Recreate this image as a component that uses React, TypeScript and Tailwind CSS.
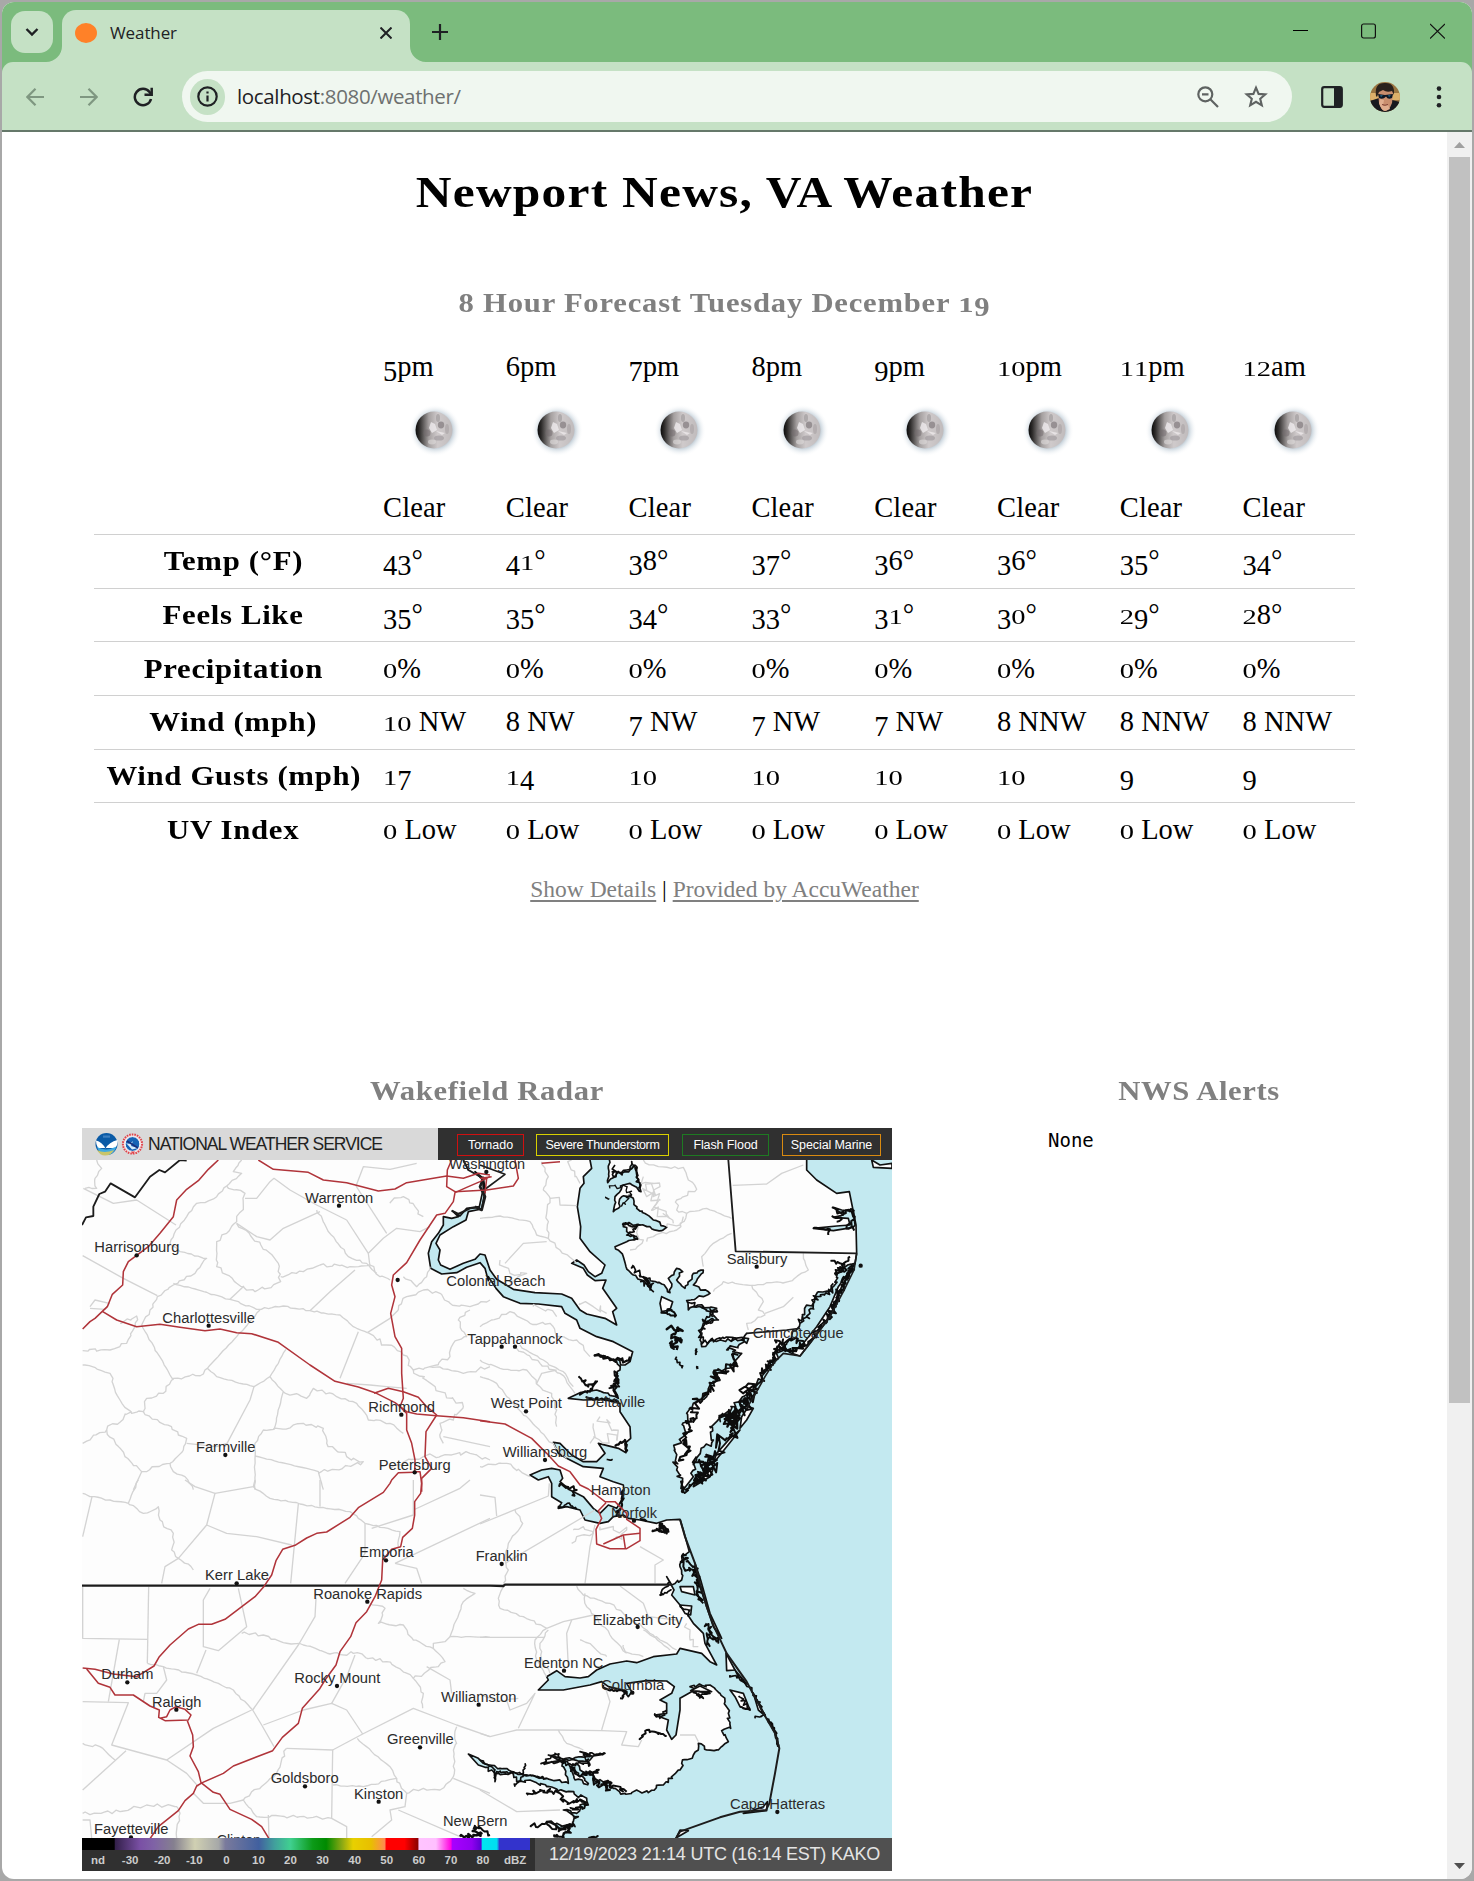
import React from 'react';

/* ---------- text with old-style figures ---------- */

const SHORT = '012';
const LOW = '34579';

function Figures({ children }: { children: string }) {
  return (
    <>
      {children.split('').map((c, i) => {
        if (SHORT.includes(c))
          return (
            <span key={i} className="inline-block origin-[0_84%] scale-y-[.74] leading-none">
              {c}
            </span>
          );
        if (LOW.includes(c))
          return (
            <span key={i} className="inline-block translate-y-[.16em] leading-none">
              {c}
            </span>
          );
        return <React.Fragment key={i}>{c}</React.Fragment>;
      })}
    </>
  );
}

/* ---------- forecast data ---------- */

const hours = ['5pm', '6pm', '7pm', '8pm', '9pm', '10pm', '11pm', '12am'];

const rows: { label: string; values: string[] }[] = [
  { label: 'Temp (°F)', values: ['43°', '41°', '38°', '37°', '36°', '36°', '35°', '34°'] },
  { label: 'Feels Like', values: ['35°', '35°', '34°', '33°', '31°', '30°', '29°', '28°'] },
  { label: 'Precipitation', values: ['0%', '0%', '0%', '0%', '0%', '0%', '0%', '0%'] },
  { label: 'Wind (mph)', values: ['10 NW', '8 NW', '7 NW', '7 NW', '7 NW', '8 NNW', '8 NNW', '8 NNW'] },
  { label: 'Wind Gusts (mph)', values: ['17', '14', '10', '10', '10', '10', '9', '9'] },
  { label: 'UV Index', values: ['0 Low', '0 Low', '0 Low', '0 Low', '0 Low', '0 Low', '0 Low', '0 Low'] },
];

function Moon() {
  return (
    <svg width="60" height="60" viewBox="0 0 60 60">
      <defs>
        <radialGradient id="halo">
          <stop offset=".6" stopColor="#9fb0bd" stopOpacity=".9" />
          <stop offset=".78" stopColor="#c3d0da" stopOpacity=".45" />
          <stop offset="1" stopColor="#fff" stopOpacity="0" />
        </radialGradient>
        <linearGradient id="shade">
          <stop offset="0" stopColor="#0b0b0b" />
          <stop offset=".1" stopColor="#2c2a29" />
          <stop offset=".36" stopColor="#a5a0a0" />
          <stop offset=".6" stopColor="#cfcacb" />
          <stop offset="1" stopColor="#c0bbbc" />
        </linearGradient>
        <clipPath id="disc">
          <circle cx="30" cy="30" r="18.5" />
        </clipPath>
        <filter id="soft">
          <feGaussianBlur stdDeviation=".7" />
        </filter>
      </defs>
      <circle cx="31" cy="30.5" r="26" fill="url(#halo)" />
      <circle cx="30" cy="30" r="18.5" fill="url(#shade)" />
      <g clipPath="url(#disc)" filter="url(#soft)">
        <ellipse cx="37" cy="25" rx="3.2" ry="3.4" fill="#857f81" opacity=".75" />
        <ellipse cx="34" cy="18" rx="2" ry="4" fill="#9a9496" opacity=".6" />
        <ellipse cx="23" cy="33" rx="3.5" ry="3.5" fill="#6f6a6b" opacity=".5" />
        <ellipse cx="35" cy="38" rx="5" ry="2.6" fill="#a39d9f" opacity=".7" />
        <ellipse cx="43" cy="29" rx="2" ry="5" fill="#a29c9e" opacity=".5" />
        <path d="M27 22L31 24L33 30L28 33L25 28Z" fill="#efeced" opacity=".8" />
        <path d="M32 31L41 33L38 35Z" fill="#eeeaeb" opacity=".8" />
        <ellipse cx="28" cy="42" rx="4" ry="2.4" fill="#dedadb" opacity=".6" />
      </g>
    </svg>
  );
}

/* ---------- radar map ---------- */

type Pt = [number, number];

/** Parses "x,y x,y" and moves the points by (dx, dy). */
function at(dx: number, dy: number, s: string): Pt[] {
  return s
    .trim()
    .split(/\s+/)
    .map((p) => {
      const [x, y] = p.split(',').map(Number);
      return [x + dx, y + dy] as Pt;
    });
}
const NW = (s: string) => at(0, 0, s);
const NE = (s: string) => at(1230, 0, s);
const SW = (s: string) => at(0, 1110, s);
const SE = (s: string) => at(1230, 1110, s);
const line = (p: Pt[]) => 'M' + p.map((q) => q.join(' ')).join('L');

/** Deterministic small kinks along a line, for marshy shores and river-like borders. */
function rough(pts: Pt[], amp: number, step = 9, seed = 7): Pt[] {
  let s = seed;
  const rnd = () => {
    s = (s * 16807) % 2147483647;
    return s / 2147483647 - 0.5;
  };
  const out: Pt[] = [pts[0]];
  for (let i = 1; i < pts.length; i++) {
    const [x0, y0] = pts[i - 1];
    const [x1, y1] = pts[i];
    const n = Math.max(1, Math.round(Math.hypot(x1 - x0, y1 - y0) / step));
    for (let k = 1; k < n; k++) {
      out.push([
        Math.round((x0 + ((x1 - x0) * k) / n + rnd() * amp) * 10) / 10,
        Math.round((y0 + ((y1 - y0) * k) / n + rnd() * amp) * 10) / 10,
      ]);
    }
    out.push([x1, y1]);
  }
  return out;
}

const sea: Pt[] = [
  ...NE('330,100 330,150 335,175 310,200 312,220 300,235 292,290 302,350 300,385 330,425 375,465 365,490 345,500 325,485 312,465 290,450 275,460 310,475 322,495 345,512 378,510 368,535 410,595 398,605 410,645 375,625 320,612 300,600 275,565 245,552 165,548 100,538 50,508 30,480 15,435 0,432'),
  ...NW('1215,448 1180,460 1140,478 1112,465 1105,450 1110,420 1098,400 1110,375 1150,350 1188,330 1195,305 1235,297 1246,240 1240,205 1215,185 1238,210 1240,235 1228,290 1190,295 1170,318 1147,303 1165,320 1145,325 1120,320 1120,345 1105,370 1085,395 1075,430 1082,475 1115,492 1160,488 1190,472 1230,458 1245,475 1255,512'),
  ...NE('25,500 48,535 70,560 120,580 175,582 245,590 255,610 290,630 300,655 350,680 400,695 458,725 450,755 435,765'),
  ...rough(NE('435,765 415,750 345,735 380,742 410,755 420,780 408,800 418,830 392,828 415,865 350,840'), 12),
  ...NE('300,848 265,865 310,870 370,868 420,880 420,905 450,950 452,985 435,1000 438,1028 415,1015 355,1000 375,1030 350,1055 310,1055 275,1035 240,1000 220,997 235,1030 260,1045 310,1070 370,1075 360,1100 400,1115 430,1125'),
  ...SE('432,30 425,60 410,85 385,75 360,100 340,85 310,50 270,30 240,5 248,-5 240,-30 215,-35 185,-30 150,-15 175,0 205,-10 215,10 215,50 245,68 235,85 260,80 300,90 315,120 360,130 385,125 400,110 430,105 445,115 480,120 530,130 560,120 600,118 610,150 628,215'),
  ...rough(SE('628,215 605,230 600,260 605,300 575,315'), 14),
  ...SE('560,290 582,330 575,345 600,375 620,400 640,430 670,460 675,490 710,555 690,545 665,520 600,505 590,522 520,530 470,548 440,543 390,552 350,570 325,590 300,594 255,590 230,572 200,590 205,600 175,630 250,630 330,615 365,605 385,620 430,630 445,650 455,635 440,610 500,602 560,603 583,620 575,640 540,660 560,670 560,700 525,705 565,720 560,750 575,778 588,765 600,690 600,655 640,632 690,640'),
  ...rough(SE('690,640 630,620 690,615 720,640 735,665 745,700 752,745 725,752 745,785 715,810 680,810 655,790 655,810 640,825 605,850 600,870 565,895 550,915 505,938 470,930 435,940 400,925 390,905 350,905 340,885 300,870 290,850 270,860 325,910 285,900 262,845 190,850'), 13),
  ...rough(SE('260,838 325,845 340,828 375,820 340,828 300,815 330,830 250,837 205,825 248,845'), 6),
  ...rough(SE('248,845 265,910 200,895 130,885 60,865 10,850'), 9),
  ...SW('1225,835 1195,822 1225,855 1245,862'),
  ...rough(SE('25,862 45,880 100,882 110,905 150,900 200,920 240,930 320,955 325,975 300,975 290,1000 250,990 295,1010 280,1025 285,1040 230,1030 200,1025 235,1045 270,1045 250,1070 260,1090'), 14),
  ...SE('270,1150 1320,1150 1320,-1200'),
];

const delmarva: Pt[] = [
  ...rough(NE('392,130 385,175 383,218 410,190 450,180 455,155 470,185 483,245 450,220 430,225 405,260 400,305 415,295 425,260 460,265 470,295 520,330 560,352 545,362 510,350 480,345 430,340 440,365 475,385 440,395'), 9),
  ...rough(NE('405,410 430,440 438,470 460,495 500,520 520,545 490,500 545,522 570,548 575,530 565,505 590,475 608,485 590,510 615,535 640,490 670,480 640,525 690,550 670,560 620,572 625,600 640,590 710,595 690,610 715,630 670,640 660,690 665,710 700,690 790,690 800,670'), 9, 9, 11),
  ...rough(NE('800,670 800,700 740,720 785,730 770,760 740,775 700,785 720,810 690,825 680,860 640,880 620,910 610,980 585,1020 590,1080 608,1130'), 20, 9, 5),
  ...NE('605,1145 640,1100'),
  ...rough(NE('640,1100 650,1050 700,990 690,950 730,915 790,860 830,820 880,750 920,700 960,640 1005,560 1060,530 1080,470 1125,460'), 18, 9, 3),
  ...NE('1130,430 1128,345 1108,245 1070,250 1010,210 980,180 980,120'),
];

const lagoons: Pt[][] = [
  NE('1125,345 1120,305 1085,300 1060,292 1090,315 1060,322 1105,325 1110,345 1070,348 1000,355 1060,362 1120,352'),
];

const outerIslands: Pt[][] = [
  NE('1125,460 1100,505 1085,530 1050,620 990,700 960,738 935,730 970,700 1010,650 1050,590 1075,530'),
  NE('820,895 800,930 780,955 785,920 805,890'),
  NE('780,960 740,1010 700,1060 710,1030 750,985'),
  NE('700,1075 690,1100 640,1130 650,1100'),
  NE('1175,150 1180,172 1236,175 1236,160 1200,165'),
  NE('545,560 578,575 570,600 545,605 540,580'),
  SE('645,250 662,300 690,400 725,475 700,440 680,380 660,320'),
  SE('738,520 740,572 765,570'),
  SE('765,570 800,612 780,600'),
  SE('750,630 790,640 810,690 780,680 765,650'),
  SE('820,640 856,708 835,690'),
  SE('600,320 640,320 645,345 605,335'),
  SE('600,375 635,378 632,405 615,400'),
  SE('632,632 660,618 695,635 660,634'),
  SE('862,965 860,992 790,1000 850,980'),
  SE('600,1050 625,1052 588,1074'),
];

const scribbles: { p: Pt[]; amp: number; w: number }[] = [
  { p: NE('1118,465 1105,500 1080,540 1060,600 1020,650 985,695 950,720 900,712 870,755 850,790 820,840 790,880'), amp: 22, w: 6 },
  { p: NE('1110,480 1085,540 1065,585 1040,620'), amp: 14, w: 6 },
  { p: NE('960,640 990,610 1010,560 1055,545 1060,520'), amp: 18, w: 5 },
  { p: NE('1000,355 1050,358 1045,375'), amp: 5, w: 6 },
  { p: NE('1060,292 1080,308 1118,300 1122,330 1100,350 1122,356'), amp: 12, w: 6 },
  { p: NE('1055,318 1085,325 1070,335'), amp: 8, w: 6 },
  { p: NE('1055,450 1080,460 1100,480 1065,490 1110,440'), amp: 12, w: 6 },
  { p: NE('795,830 825,850 780,880 800,900 740,920 770,950 720,1000 690,1040 700,1070 660,1090 640,1120'), amp: 42, w: 6 },
  { p: NE('730,910 750,930 780,925 760,950 740,930 785,900 800,880'), amp: 30, w: 7 },
  { p: NE('650,1040 670,1080 690,1050 655,1110 700,1075'), amp: 28, w: 6 },
  { p: NE('890,700 950,690 975,705 930,725 900,700 875,755 860,780'), amp: 20, w: 6 },
  { p: NE('775,735 760,770 715,780 700,820 680,850 645,880 640,900'), amp: 30, w: 6 },
  { p: NE('640,905 650,925 620,940 630,960 610,990 625,1020 600,1050'), amp: 20, w: 6 },
  { p: NE('625,575 680,600 710,600 670,635 700,630 660,660 665,700 720,685 795,690'), amp: 14, w: 5 },
  { p: NE('565,655 605,660 575,675 605,690 570,700 590,720'), amp: 20, w: 7 },
  { p: NE('590,740 605,775'), amp: 12, w: 5 },
  { p: NE('545,605 575,600 585,620 560,612'), amp: 12, w: 6 },
  { p: NE('650,715 648,735'), amp: 5, w: 6 },
  { p: NE('652,768 653,777'), amp: 3, w: 7 },
  { p: NE('300,800 325,830 350,815 330,845 300,850'), amp: 12, w: 6 },
  { p: NE('320,862 370,868 415,872'), amp: 12, w: 6 },
  { p: NE('345,735 400,748 440,752 450,740'), amp: 12, w: 7 },
  { p: NE('390,835 415,820 405,785 410,860'), amp: 12, w: 6 },
  { p: NE('460,465 480,500 520,520 510,540 480,515'), amp: 16, w: 5 },
  { p: NE('405,165 400,200 440,180 470,170 475,235'), amp: 14, w: 5 },
  { p: NE('390,235 430,225 455,255 425,290'), amp: 14, w: 4 },
  { p: NE('375,262 388,268'), amp: 6, w: 5 },
  { p: NE('430,345 480,345 440,375 475,388'), amp: 14, w: 5 },
  { p: NE('408,1010 435,990 438,1025'), amp: 10, w: 7 },
  { p: NE('380,1048 398,1048'), amp: 5, w: 5 },
  { p: SE('520,150 565,155 540,130 560,160 535,145'), amp: 14, w: 7 },
  { p: SE('430,30 425,70 410,105 425,110'), amp: 10, w: 7 },
  { p: SE('240,10 290,30 275,45'), amp: 14, w: 6 },
  { p: SE('235,85 262,70 290,88'), amp: 8, w: 5 },
  { p: SE('480,118 500,124'), amp: 8, w: 7 },
  { p: SE('620,225 610,260 640,270 650,300 655,350 670,370'), amp: 24, w: 6 },
  { p: SE('625,240 650,280 660,320 655,350'), amp: 16, w: 6 },
  { p: SE('570,305 540,345 575,330'), amp: 8, w: 5 },
  { p: SE('680,430 700,470 715,485 680,460 690,500'), amp: 16, w: 6 },
  { p: SE('750,585 790,600 820,640 855,705 825,715'), amp: 10, w: 5 },
  { p: SE('865,715 885,755 895,800'), amp: 6, w: 8 },
  { p: SE('780,650 810,690 780,680'), amp: 12, w: 5 },
  { p: SE('600,380 630,390 625,410'), amp: 10, w: 5 },
  { p: SE('640,635 670,655 650,645 690,635'), amp: 10, w: 5 },
  { p: SE('525,700 540,715 560,690'), amp: 10, w: 5 },
  { p: SE('480,780 500,750 560,768'), amp: 8, w: 6 },
  { p: SE('185,850 225,820 250,850 330,855 310,825 375,820'), amp: 12, w: 5 },
  { p: SE('280,860 300,890 350,870 345,910 390,930 375,905 440,935'), amp: 20, w: 6 },
  { p: SE('105,920 130,885 200,895'), amp: 10, w: 5 },
  { p: SE('0,840 45,870 45,905 50,875 130,880 135,850'), amp: 6, w: 5 },
  { p: SE('145,945 180,930 240,940 250,965 300,960 320,975 270,985'), amp: 18, w: 6 },
  { p: SE('155,1040 200,1030 240,1050 280,1035 250,1070 220,1065'), amp: 16, w: 6 },
  { p: SE('-20,1050 5,1060 -20,1065 -60,1070'), amp: 14, w: 7 },
  { p: SE('-15,1035 30,1065'), amp: 10, w: 6 },
  { p: SE('325,1072 355,1070'), amp: 6, w: 6 },
  { p: SE('370,615 385,630 440,635 420,655'), amp: 8, w: 6 },
  { p: SE('610,5 610,35 640,10 670,0'), amp: 14, w: 6 },
];

const counties: { p: Pt[]; amp?: number }[] = [
  { p: NW('80,150 95,175 75,205 80,235 45,235'), amp: 6 },
  { p: NW('40,235 130,280 200,270 318,345') },
  { p: NW('515,150 490,185 515,190 470,228 440,260 405,278 380,280 350,320 318,360 300,400'), amp: 4 },
  { p: NW('470,228 525,250 520,290 500,335 470,370 440,395 440,470 500,520 555,545 632,515 625,460 610,440 500,340'), amp: 8 },
  { p: NW('525,265 560,265 600,215 612,205 660,240 740,285 830,330') },
  { p: NW('500,340 560,380 600,390 640,355 750,305') },
  { p: NW('740,300 770,355 835,440 890,460 920,490'), amp: 6 },
  { p: NW('38,437 160,505 262,557') },
  { p: NW('300,400 330,425 410,445 375,490 310,525 262,560 240,600 215,645'), amp: 6 },
  { p: NW('310,520 480,568 560,598 640,588 720,602 810,615 850,650 892,668'), amp: 4 },
  { p: NW('480,568 522,528') },
  { p: NW('632,500 700,485 750,465 840,470 900,465 930,500 960,510'), amp: 8 },
  { p: NW('720,602 780,545 855,480') },
  { p: NW('830,330 895,430 940,385 980,355 1050,365 1080,350') },
  { p: NW('895,430 900,470') },
  { p: NW('858,228 880,170 960,178 1040,160') },
  { p: NW('858,228 950,370') },
  { p: NW('960,280 1000,260 1035,290 1060,320'), amp: 14 },
  { p: NW('60,590 75,570 118,580 105,598 60,595') },
  { p: NW('150,640 200,618 195,650 170,700 120,720 38,722'), amp: 8 },
  { p: NW('215,645 300,795 310,810'), amp: 4 },
  { p: NW('38,765 120,790 150,870 185,910 220,905 230,865 280,850 310,805 400,792 412,775'), amp: 8 },
  { p: NW('570,600 500,680 412,775 440,800 552,830 600,800 648,718'), amp: 2 },
  { p: NW('552,830 540,870 466,1010') },
  { p: NW('600,800 640,845 612,958 580,960 555,1000 555,1139'), amp: 3 },
  { p: NW('640,845 710,865 730,835 800,860 860,880 895,930 960,940 1000,970'), amp: 8 },
  { p: NW('865,665 810,805') },
  { p: NW('892,668 960,625 985,600') },
  { p: NW('892,668 950,705 1000,735 1030,780 1080,770 1180,790 1260,770'), amp: 10 },
  { p: NW('985,600 1010,560 1060,540 1110,550 1140,580 1200,590 1260,570'), amp: 8 },
  { p: NW('1000,500 1040,530 1070,500 1080,470'), amp: 6 },
  { p: NW('1200,600 1165,630 1190,680 1150,700 1140,740 1080,770'), amp: 8 },
  { p: NW('185,905 110,960 38,1000'), amp: 12 },
  { p: NW('220,905 350,985 340,1020 300,1060 215,1085 165,1040 110,960'), amp: 8 },
  { p: NW('215,1085 190,1139') },
  { p: NW('350,1000 440,1010 470,1000') },
  { p: NW('300,1060 310,1085 345,1100 370,1139'), amp: 5 },
  { p: NW('555,1038 745,1085 760,1139'), amp: 2 },
  { p: NW('610,958 700,940 760,955 770,1000 830,1040 880,1055 745,1090'), amp: 10 },
  { p: NW('830,820 900,825 950,830 1010,835') },
  { p: NW('1030,780 1110,845 1180,890 1150,930 1110,940 1120,1000'), amp: 12 },
  { p: NW('1120,980 1260,1010') },
  { p: NW('960,1070 1060,1040 1200,1030 1260,1050'), amp: 10 },
  { p: SW('38,40 60,50 120,60 175,70 205,0'), amp: 4 },
  { p: SW('66,50 38,170') },
  { p: SW('175,70 220,100 265,80 270,120 310,160 305,210 325,235 370,270'), amp: 8 },
  { p: SW('325,235 410,135 435,40 550,20 555,0') },
  { p: SW('435,40 375,20 345,0') },
  { p: SW('550,20 600,55 690,72 840,95 885,130 990,155 985,200'), amp: 4 },
  { p: SW('410,135 470,160 560,170 665,195') },
  { p: SW('685,72 662,310') },
  { p: SW('750,0 750,80') },
  { p: SW('885,130 885,220 825,310') },
  { p: SW('1030,0 1030,105 905,145') },
  { p: SW('1030,90 1170,25 1200,0') },
  { p: SW('975,250 1260,115') },
  { p: SW('975,250 1040,265 1055,310') },
  { p: SW('325,235 285,260 275,310') },
  { p: SW('38,320 38,475 232,478') },
  { p: SW('236,320 232,550') },
  { p: SW('148,478 115,665') },
  { p: SW('420,325 400,360 400,500 445,512 530,440 505,325') },
  { p: SW('408,510 380,580') },
  { p: SW('232,550 280,560 380,585 490,630 548,690'), amp: 4 },
  { p: SW('280,560 290,600 260,640 225,640 220,665') },
  { p: SW('38,665 175,668 125,795 290,840') },
  { p: SW('515,460 580,465 640,488 700,495 780,522 850,520 950,545 1030,595'), amp: 8 },
  { p: SW('738,355 735,410 685,495 548,690 575,735 612,800') },
  { p: SW('855,525 830,590 785,670') },
  { p: SW('580,735 700,690 785,670 830,690 878,762') },
  { p: SW('545,690 430,745 290,840 350,880 385,920') },
  { p: SW('38,790 90,800 135,840'), amp: 8 },
  { p: SW('168,812 38,930') },
  { p: SW('788,810 878,762 1030,685 1160,735 1260,770') },
  { p: SW('650,805 788,810 785,1015 830,1040 830,1075') },
  { p: SW('650,805 612,890 520,960 560,1010 690,1010 785,1015'), amp: 6 },
  { p: SW('370,940 400,970 480,970 520,960') },
  { p: SW('862,775 905,815 960,860 980,895 880,920 788,915'), amp: 4 },
  { p: SW('980,895 1010,940 1060,925 1110,930 1150,890 1160,740'), amp: 8 },
  { p: SW('1010,940 1005,980 960,990 965,1020 905,1070') },
  { p: SW('985,990 1170,1070') },
  { p: SW('1150,895 1260,940') },
  { p: SW('38,1000 150,995 230,975 320,980 330,1000 320,1075'), amp: 8 },
  { p: SW('38,1020 60,1020 65,1075') },
  { p: SW('595,1005 597,1075') },
  { p: SW('900,370 945,385 925,430 1000,435 1030,480 1090,505 1125,545 1030,595 1060,640 1058,685'), amp: 8 },
  { p: SW('1180,325 1215,340 1180,365 1140,470 1260,472'), amp: 3 },
  { p: SW('1140,470 1125,485 1090,490 1090,508') },
  { p: SW('1070,560 1140,600 1145,640') },
  { p: NE('185,155 205,200 190,240 210,265 200,310 205,385 240,420 290,460'), amp: 8 },
  { p: NE('275,150 285,200 300,220'), amp: 22 },
  { p: NE('210,265 238,262 240,285 290,287') },
  { p: NE('0,325 60,318 150,335 170,375 205,385'), amp: 3 },
  { p: NE('75,460 130,400 200,395') },
  { p: NE('60,450 90,490 140,490 90,520'), amp: 14 },
  { p: NE('490,150 535,170 610,172 625,210 650,238 590,270 590,300 620,310'), amp: 8 },
  { p: NE('620,310 680,295 755,325'), amp: 4 },
  { p: NE('758,226 860,222 905,190 970,165') },
  { p: NE('500,395 520,380 590,360 620,310'), amp: 12 },
  { p: NE('755,370 700,400 665,440 670,470'), amp: 4 },
  { p: NE('700,545 730,515 800,525 925,515 985,480 970,430'), amp: 6 },
  { p: NE('815,525 850,575 835,600 855,615 800,640 805,660'), amp: 6 },
  { p: NE('855,610 910,590 940,562') },
  { p: NE('490,200 520,220 500,260 540,270 520,300 560,320'), amp: 26 },
  { p: NE('500,240 540,230 530,280 580,340'), amp: 26 },
  { p: NE('560,350 600,345 610,320'), amp: 18 },
  { p: NE('445,350 475,350 490,390 450,420'), amp: 16 },
  { p: NE('0,650 90,605 150,640 210,640 230,680 290,690 330,740'), amp: 6 },
  { p: NE('0,750 60,775 140,780 180,830 215,850 230,900 230,950'), amp: 8 },
  { p: NE('110,715 180,760 240,790 270,830 285,850'), amp: 6 },
  { p: NE('120,705 190,750 250,785 280,830'), amp: 6 },
  { p: NE('170,820 185,790 230,780') },
  { p: NE('160,590 200,600 230,620'), amp: 20 },
  { p: NE('0,800 50,820 80,860 150,930 200,985 260,1045'), amp: 6 },
  { p: NE('340,940 345,980 330,1000'), amp: 4 },
  { p: NE('300,580 340,590 380,610'), amp: 24 },
  { p: NE('360,920 400,960 410,990 340,980'), amp: 26 },
  { p: NE('0,1070 80,1060 150,1100'), amp: 8 },
  { p: SE('0,45 45,52 50,108') },
  { p: SE('0,132 205,48 208,10') },
  { p: SE('105,90 128,130 85,190 75,240 85,270 70,310'), amp: 5 },
  { p: SE('75,250 345,90') },
  { p: SE('345,135 330,200 315,310') },
  { p: SE('280,150 310,140 340,160 290,170 275,190'), amp: 12 },
  { p: SE('360,140 400,150 440,150 400,180'), amp: 22 },
  { p: SE('480,200 550,240 525,255 525,310') },
  { p: SE('70,320 55,355 60,385 130,410 200,445'), amp: 4 },
  { p: SE('200,445 165,480 170,540 200,590'), amp: 4 },
  { p: SE('205,450 180,490 185,540 210,580'), amp: 4 },
  { p: SE('200,445 250,425 340,405') },
  { p: SE('275,420 260,460 265,560') },
  { p: SE('290,318 310,345 390,370 440,410 500,450 570,510'), amp: 4 },
  { p: SE('315,340 320,380 390,465 440,520'), amp: 6 },
  { p: SE('420,318 490,370 505,410 590,420') },
  { p: SE('490,450 540,480 590,510'), amp: 6 },
  { p: SE('300,480 340,500 380,530'), amp: 12 },
  { p: SE('430,495 450,520 490,530'), amp: 12 },
  { p: SE('620,430 630,480 655,500'), amp: 14 },
  { p: SE('0,472 195,472') },
  { p: SE('80,660 90,690 140,670 165,640 115,745') },
  { p: SE('0,760 30,770 110,750 230,750 365,752 440,755 425,795 475,800 485,780') },
  { p: SE('375,620 390,665 365,750') },
  { p: SE('235,750 260,790 310,810'), amp: 4 },
  { p: SE('600,765 645,765 655,785') },
  { p: SE('0,930 110,995 240,990') },
  { p: SE('0,640 50,665 115,655'), amp: 4 },
];

const roads: Pt[][] = [
  NW('445,150 415,178 385,212 350,238 320,270 310,320 270,370 235,410 175,455 160,485 158,525 127,553 112,590 97,604 75,625 60,635 38,657'),
  NW('97,604 140,630 200,650 270,643 330,652 405,662 450,657 500,668 545,671 625,697 720,765 795,814 865,831 915,848 975,878 1010,905 1040,912 1100,917 1180,923 1260,935'),
  NW('565,150 610,178 715,187 760,210 830,218 925,243 975,237 1010,218 1130,198 1180,205 1225,190 1260,195'),
  NW('1145,150 1132,180 1130,230 1155,245 1250,240 1330,228 1345,205 1335,150'),
  NE('185,160 240,155'),
  NW('1260,200 1230,215 1190,232 1155,248 1150,275 1125,310 1100,315 1050,390 1010,458 970,495 965,525 975,560 962,610 975,680 995,715 995,790 1000,865 990,890 1010,910 1010,960 1025,1000 1035,1050 1034,1087'),
  NW('1245,250 1250,205 1232,205 1265,200'),
  NW('912,850 955,835 1000,845 1045,862 1070,890 1100,915 1068,965 1065,1040 1085,1075 1055,1105 1055,1145'),
  [...NE('0,932 75,942 155,985 200,1030 235,1068 270,1085 300,1125'), ...SE('325,27 375,65 405,65 440,100 440,118 480,145 480,182 440,206 390,206 350,192 348,148 365,115 355,92 378,68')],
  SE('370,192 430,165 480,160'),
  SE('430,165 436,205'),
  [...NW('1034,1087 985,1088 965,1110'), ...SW('960,10 940,37 865,83 840,112 770,156 740,160 710,174 675,196 638,208 618,242 605,285 580,322 555,350 465,418 425,433 385,433 355,447 300,495 268,530 252,558 200,590 130,582 75,568 38,564')],
  [...NW('1030,1085 1050,1085 1055,1120'), ...SW('1052,40 1034,65 1034,105 1027,145 998,172 992,200 965,208 938,240 935,300 915,350 890,395 858,428 842,470 810,515 798,555 765,600 748,628 697,685 685,730 637,772 608,812 490,858 460,880 397,908 380,918 370,940 345,962 325,992 265,1040 240,1076')],
  SW('50,567 85,610 120,622 135,645 190,645 240,678 268,690 266,712 285,722 355,720 363,705 345,688 318,680 300,690 290,710 270,715'),
  SW('352,722 368,765 370,800 360,828 385,875 393,908 430,937 450,943 480,988 545,1018 575,1040 597,1076'),
];

const borders: { d: Pt[]; w: number }[] = [
  { d: NW('36,345 48,322 70,318 70,290 88,252 105,245 122,220 195,262 240,200 268,180 285,187 330,150 350,152'), w: 5.5 },
  { d: [...SW('36,317 1260,317'), ...SE('70,318 75,314 575,314')], w: 7 },
  { d: NE('745,150 767,424 1130,430'), w: 5.5 },
  { d: NE('800,670 920,660 960,655'), w: 5 },
  { d: NE('0,165 75,193 12,240'), w: 5 },
  { d: NW('1180,150 1195,180 1240,205'), w: 6 },
  { d: NE('12,200 0,230 15,260 5,300 -15,290'), w: 8 },
  { d: NW('1145,302 1165,312 1200,295 1230,292'), w: 6 },
  { d: SE('600,118 615,170 645,250 660,310 680,380 702,440 740,520 800,605 855,708 885,760 898,805 885,880 868,970 858,990 780,995 720,1012 600,1055 585,1080'), w: 6 },
  { d: NE('1130,430 1122,480 1090,545 1050,620 990,700 960,738 910,730 880,760 855,800 830,845 800,895'), w: 5 },
];

const cities: [string, number, number, number][] = [
  ['Washington', 1137, 177, 228],
  ['Warrenton', 705, 278, 205],
  ['Harrisonburg', 73, 427, 255],
  ['Charlottesville', 277, 638, 278],
  ['Colonial Beach', 1129, 527, 297],
  ['Tappahannock', 1192, 702, 286],
  ['Richmond', 895, 905, 200],
  ['Farmville', 378, 1027, 178],
  ['Petersburg', 926, 1079, 216],
  ['West Point', 1262, 895, 214],
  ['Deltaville', 1546, 890, 180],
  ['Williamsburg', 1298, 1042, 254],
  ['Salisbury', 1970, 463, 182],
  ['Chincoteague', 2048, 685, 273],
  ['Hampton', 1562, 1156, 180],
  ['Norfolk', 1623, 1223, 138],
  ['Franklin', 1217, 1352, 156],
  ['Emporia', 868, 1342, 163],
  ['Kerr Lake', 405, 1410, 192],
  ['Roanoke Rapids', 730, 1467, 326],
  ['Durham', 94, 1708, 156],
  ['Raleigh', 246, 1791, 148],
  ['Rocky Mount', 673, 1720, 258],
  ['Williamston', 1113, 1776, 226],
  ['Greenville', 951, 1903, 200],
  ['Goldsboro', 602, 2020, 204],
  ['Kinston', 852, 2066, 148],
  ['New Bern', 1119, 2148, 193],
  ['Fayetteville', 72, 2173, 223],
  ['Clinton', 440, 2205, 133],
  ['Elizabeth City', 1568, 1544, 270],
  ['Edenton NC', 1362, 1673, 238],
  ['Columbia', 1593, 1739, 190],
  ['Cape Hatteras', 1980, 2097, 285],
];

const dots = NW(
  '807,287 200,436 416,647 983,510 994,914 466,1035 1034,1087 1249,186 1295,710 1335,710 1368,904 1425,1050 2060,470 2372,467 948,1351 500,1420 892,1475 172,1717 319,1799 801,1728 1226,1784 1050,1912 705,2029 926,2075 1215,2155 183,2182 1295,1362 1703,1551 1482,1682 1687,1748 2122,2106 1692,1232',
);

function RadarMap() {
  return (
    <svg className="block" width="810" height="678" viewBox="36 150 2430 2034" strokeLinejoin="round" fill="none">
      <rect x="0" y="100" width="2500" height="2200" fill="#fdfdfd" />
      <path d={line(sea) + 'Z'} fill="#c3e9f0" stroke="#111" strokeWidth="5" />
      <path d={line(delmarva) + 'Z'} fill="#fdfdfd" stroke="#111" strokeWidth="5" />
      {lagoons.map((p, i) => (
        <path key={i} d={line(p) + 'Z'} fill="#c3e9f0" stroke="#111" strokeWidth="5" />
      ))}
      {outerIslands.map((p, i) => (
        <path key={i} d={line(p) + 'Z'} fill="#fdfdfd" stroke="#111" strokeWidth="5" />
      ))}
      <g stroke="#d3d3d3" strokeWidth="4">
        {counties.map((c, i) => (
          <path key={i} d={line(c.amp ? rough(c.p, c.amp * 1.3, 12, i + 3) : c.p)} />
        ))}
      </g>
      <g stroke="#0c0c0c">
        {scribbles.map((s, i) => (
          <path key={i} d={line(rough(s.p, s.amp, 5, i + 21))} strokeWidth={s.w} />
        ))}
      </g>
      <g stroke="#1c1c1c">
        {borders.map((b, i) => (
          <path key={i} d={line(b.d)} strokeWidth={b.w} />
        ))}
      </g>
      <g stroke="#b0343a" strokeWidth="4.6">
        {roads.map((r, i) => (
          <path key={i} d={line(r)} />
        ))}
      </g>
      <g fill="#111">
        {dots.map(([x, y], i) => (
          <circle key={i} cx={x} cy={y} r="6.5" />
        ))}
      </g>
      <g fill="#2b2b2b" fontSize="44" fontFamily="'Liberation Sans', Arial, sans-serif">
        {cities.map(([name, x, y, w]) => (
          <text key={name} x={x} y={y} textLength={w} lengthAdjust="spacingAndGlyphs">
            {name}
          </text>
        ))}
      </g>
    </svg>
  );
}

const scale = ['nd', '-30', '-20', '-10', '0', '10', '20', '30', '40', '50', '60', '70', '80', 'dBZ'];

function NoaaLogos() {
  return (
    <svg width="50" height="26" viewBox="0 0 50 26">
      <circle cx="11.5" cy="13" r="11" fill="#0a5aa6" />
      <path d="M1 9.500Q7 11 10.500 17.500Q14 11 22.500 9Q23 14 20 17L3 17Q.8 13 1 9.500Z" fill="#fff" />
      <path d="M2 16Q11 21 21.500 15.500Q19 24 11.500 24Q4.500 24 2 16Z" fill="#3fa9e0" />
      <path d="M2 19Q9 23 19 19Q16 24.500 10 24.500Q5 24.500 2 19Z" fill="#c9c56a" />
      <rect x="8" y="4.500" width="7" height="2.200" fill="#3d7fc0" />
      <circle cx="37.500" cy="13" r="9.600" fill="#f4dede" stroke="#e0444b" strokeWidth="2" strokeDasharray="1.600 1" />
      <circle cx="37.500" cy="13" r="7.400" fill="#1763b5" stroke="#fff" strokeWidth="1" />
      <path d="M31 12Q35 14 38 10L36 15L43 17L37 18.500Z" fill="#d8ecfb" />
      <path d="M32 10L43 17" stroke="#1a2f7c" strokeWidth="1.500" />
      <path d="M36 20.500L40 20.500L38 23Z" fill="#e0444b" />
    </svg>
  );
}

function Radar() {
  return (
    <div className="w-[810px] font-['Liberation_Sans',Arial,sans-serif]">
      <div className="flex h-8 bg-[#303030]">
        <div className="flex w-[356px] items-center bg-[#d9d9d9] pl-[13px]">
          <NoaaLogos />
          <span className="ml-[3px] whitespace-nowrap text-[17.500px] tracking-[-1px] text-[#222]">NATIONAL WEATHER SERVICE</span>
        </div>
        <div className="flex flex-1 items-center pt-px pl-[19px] text-[12.500px] text-white">
          <span className="flex h-[22px] w-[67px] items-center justify-center border-[1.500px] border-[#d01010] pt-px">Tornado</span>
          <span className="ml-3 flex h-[22px] w-[133px] items-center justify-center border-[1.500px] border-[#d8d000] pt-px tracking-[-0.35px]">
            Severe Thunderstorm
          </span>
          <span className="ml-[13px] flex h-[22px] w-[87px] items-center justify-center border-[1.500px] border-[#1e7a22] pt-px tracking-[-0.1px]">
            Flash Flood
          </span>
          <span className="ml-[13px] flex h-[22px] w-[99px] items-center justify-center border-[1.500px] border-[#d98a10] pt-px tracking-[-0.1px]">
            Special Marine
          </span>
        </div>
      </div>
      <RadarMap />
      <div className="flex h-[33px] bg-[#505050]">
        <div className="w-[453px] bg-[#303030]">
          <div className="h-3 w-[448px] bg-[linear-gradient(90deg,#000_0_7.2%,#33204a_7.4%,#7a50a5_13%,#7f62a6_16%,#85808f_20.500%,#d0d0b2_25.200%,#a6a8a8_30.500%,#7a7a9c_32%,#41609f_39.500%,#41a09c_43%,#40d090_46.500%,#0c9a18_51.500%,#008a00_54.500%,#8aa814_58%,#e8d000_60.500%,#e8bf00_64.500%,#ff8a50_67.600%,#ff0000_67.900%,#ff0000_72%,#8b0000_75%,#ffc4ff_75.200%,#ffc0ff_79%,#ff00e0_82.400%,#a800ff_82.600%,#9000f0_87%,#5800d0_89.100%,#00e4f0_89.300%,#00e0f0_92.600%,#3333cc_93.200%)]" />
          <div className="flex h-5 w-[449px] text-[11.500px] font-bold text-[#cccccc]">
            {scale.map((s) => (
              <span key={s} className="flex-1 pt-px text-center leading-[19px]">
                {s}
              </span>
            ))}
          </div>
        </div>
        <div className="flex flex-1 items-center pl-[14px] text-[18px] tracking-[-0.22px] whitespace-nowrap text-[#e4e4e4]">
          12/19/2023 21:14 UTC (16:14 EST) KAKO
        </div>
      </div>
    </div>
  );
}

/* ---------- browser chrome ---------- */

function Avatar() {
  return (
    <svg width="30" height="30" viewBox="0 0 30 30">
      <defs>
        <clipPath id="face">
          <circle cx="15" cy="15" r="15" />
        </clipPath>
      </defs>
      <g clipPath="url(#face)">
        <rect width="30" height="30" fill="#9a7440" />
        <rect y="11" width="30" height="7" fill="#dcb06a" />
        <path d="M0 30V19L9 16L22 18L30 20V30Z" fill="#181a1f" />
        <path d="M8 10Q8 5 15 5Q23 5 23 11L22 21Q19 29 15 29Q11 28 9 21Z" fill="#c98e6e" />
        <path d="M14 18L13 24L18 23L20 27L15 29Q11 28 9 21L10 17Z" fill="#e0ad8e" />
        <path d="M6 14Q4 0 16 1Q25 1 24 13L22 9Q17 11 13 8L9 10L7 15Z" fill="#2a211c" />
        <path d="M8 12L15 13L23 12L22 16Q18 18 16 14.500Q13 18 9 16Z" fill="#0c1624" />
        <path d="M10 13L13 13L11 15.500ZM18 13L21 13L19 15.500Z" fill="#1e5675" />
        <path d="M12 22.500Q15 24 18 22.500" stroke="#7d3f34" strokeWidth="1" fill="none" />
      </g>
    </svg>
  );
}

function TabStrip() {
  return (
    <div className="flex h-[60px] bg-[#7bbb7d]">
      <div className="flex w-[60px] items-start pt-[9px] pl-[9px]">
        <div className="flex h-[42px] w-[42px] items-center justify-center rounded-[14px] bg-[#c5e1c5]">
          <svg width="14" height="10" viewBox="0 0 14 10" fill="none" stroke="#1f2124" strokeWidth="2.400">
            <path d="M1.500 2L7 7.500L12.500 2" />
          </svg>
        </div>
      </div>
      <div className="relative mt-2 flex h-[52px] w-[348px] items-center rounded-t-[14px] bg-[#c5e1c5] pb-[7px]">
        <svg className="absolute bottom-0 -left-4" width="16" height="16">
          <path d="M16 0V16H0A16 16 0 0 0 16 0Z" fill="#c5e1c5" />
        </svg>
        <svg className="absolute -right-4 bottom-0" width="16" height="16">
          <path d="M0 0V16H16A16 16 0 0 1 0 0Z" fill="#c5e1c5" />
        </svg>
        <span className="ml-[13px] h-[20px] w-[22px] rounded-[50%] bg-[#ff8128]" />
        <span className="ml-[13px] flex-1 text-[17px] tracking-[-0.1px] text-[#1f2124]">Weather</span>
        <svg className="mr-[18px]" width="12" height="12" viewBox="0 0 12 12" stroke="#1f2124" strokeWidth="2">
          <path d="M.5 .5L11.500 11.500M11.500 .5L.5 11.500" />
        </svg>
      </div>
      <svg className="mt-[22px] ml-[22px]" width="16" height="16" viewBox="0 0 16 16" stroke="#1f2124" strokeWidth="2.200">
        <path d="M8 0V16M0 8H16" />
      </svg>
      <div className="ml-auto flex items-start pt-[21px]">
        <svg className="mr-[53px]" width="15" height="16">
          <path d="M0 7.500H15" stroke="#000" />
        </svg>
        <svg className="mr-[54px]" width="15" height="16" viewBox="0 0 15 16" fill="none" stroke="#111" strokeWidth="1.200">
          <rect x=".6" y="1" width="13.800" height="14" rx="2" />
        </svg>
        <svg className="mr-[27px]" width="15" height="16" viewBox="0 0 15 16" stroke="#111" strokeWidth="1.200">
          <path d="M0 1L15 15.500M15 1L0 15.500" />
        </svg>
      </div>
    </div>
  );
}

function Toolbar() {
  return (
    <div className="bg-[#7bbb7d]">
      <div className="flex h-[70px] items-start rounded-t-[11px] border-b-2 border-[#65786a] bg-[#c5e1c5] pt-[9px]">
        <div className="flex h-[51px] w-[180px] items-center pl-6">
          <svg width="18" height="18" viewBox="0 0 18 18" fill="none" stroke="#7f9781" strokeWidth="2.200">
            <path d="M18 9H2M9.500 .8L1.400 9L9.500 17.200" />
          </svg>
          <svg className="ml-9" width="18" height="18" viewBox="0 0 18 18" fill="none" stroke="#7f9781" strokeWidth="2.200">
            <path d="M0 9H16M8.500 .8L16.600 9L8.500 17.200" />
          </svg>
          <svg className="ml-[35px]" width="20" height="20" viewBox="0 0 20 20" fill="none" stroke="#1f2124" strokeWidth="2.500">
            <path d="M18 12A8.200 8.200 0 1 1 16.500 5L18 7" />
            <path d="M18.700 .8V7.700H11.500" />
          </svg>
        </div>
        <div className="flex h-[51px] w-[1110px] items-center rounded-full bg-[#f0f7f0] pl-2">
          <span className="flex h-9 w-[35px] items-center justify-center rounded-full bg-[#c5e1c5]">
            <svg width="21" height="21" viewBox="0 0 21 21" fill="none" stroke="#1f2124" strokeWidth="2.200">
              <circle cx="10.500" cy="10.500" r="9.200" />
              <path d="M10.500 9.500V15.500" />
              <path d="M10.500 5.500V7.600" />
            </svg>
          </span>
          <span className="ml-[12px] flex-1 text-[20.500px] tracking-[-0.35px] text-[#1f2124]">
            localhost<span className="text-[#6d706f]">:8080/weather/</span>
          </span>
          <svg className="mr-[25px]" width="22" height="22" viewBox="0 0 22 22" fill="none" stroke="#5f6362" strokeWidth="2.200">
            <circle cx="8.300" cy="8.300" r="7" />
            <path d="M13.300 13.300L21 21M5 8.300H11.500" />
          </svg>
          <svg className="mr-6" width="24" height="23" viewBox="0 0 24 23" fill="none" stroke="#5f6362" strokeWidth="2.100">
            <path d="M12 2.700L14.600 8.900L21.300 9.400L16.200 13.800L17.800 20.300L12 16.800L6.200 20.300L7.800 13.800L2.700 9.400L9.400 8.900Z" />
          </svg>
        </div>
        <div className="flex h-[51px] flex-1 items-center">
          <svg className="ml-[29px]" width="22" height="22" viewBox="0 0 22 22">
            <rect x="1.200" y="1.200" width="19.600" height="19.600" rx="2" fill="none" stroke="#1f2124" strokeWidth="2.200" />
            <rect x="13" y="1" width="8" height="20" fill="#1f2124" />
          </svg>
          <span className="ml-[27px]">
            <Avatar />
          </span>
          <svg className="ml-9" width="6" height="22" viewBox="0 0 6 22" fill="#1f2124">
            <circle cx="3" cy="2.600" r="2.300" />
            <circle cx="3" cy="11" r="2.300" />
            <circle cx="3" cy="19.300" r="2.300" />
          </svg>
        </div>
      </div>
    </div>
  );
}

function Scrollbar() {
  return (
    <div className="flex w-[25px] flex-col items-center bg-[#f0f0f0]">
      <svg className="mt-[10px] mb-[9px]" width="11" height="6">
        <path d="M0 6L5.500 0L11 6Z" fill="#a0a0a0" />
      </svg>
      <div className="h-[1246px] w-[21px] bg-[#c1c1c1]" />
      <svg className="mt-auto mb-[10px]" width="11" height="6">
        <path d="M0 0L5.500 6L11 0Z" fill="#505050" />
      </svg>
    </div>
  );
}

/* ---------- page ---------- */

function Forecast() {
  return (
    <div className="mx-auto mt-[26px] w-[1261px] text-[28.500px]">
      <div className="grid grid-cols-[289px_repeat(8,122.800px)] pb-2">
        <div />
        {hours.map((h) => (
          <div key={h} className="leading-9">
            <Figures>{h}</Figures>
            <div className="flex h-[94px] w-[101px] items-center justify-center pb-1">
              <Moon />
            </div>
            <div className="mt-[11px] tracking-[0.15px]">Clear</div>
          </div>
        ))}
      </div>
      {rows.map((r) => (
        <div
          key={r.label}
          className="grid h-[53.700px] grid-cols-[279px_repeat(8,122.800px)] items-center border-t border-[#d0d0d0] leading-9 whitespace-nowrap"
        >
          <div className="flex justify-center text-[28px] font-bold tracking-[0.600px]">
            <span className="scale-x-110">{r.label}</span>
          </div>
          {r.values.map((v, i) => (
            <div key={i} className="pl-[10px]">
              <Figures>{v}</Figures>
            </div>
          ))}
        </div>
      ))}
    </div>
  );
}

export default function App() {
  return (
    <div className="h-[1881px] w-[1474px] overflow-hidden bg-[#a8a8a8] p-0.5">
      <div className="flex h-[1877px] w-[1470px] flex-col overflow-hidden rounded-xl bg-white font-['Open_Sans','Noto_Sans',sans-serif]">
        <TabStrip />
        <Toolbar />
        <div className="flex min-h-0 flex-1">
          <main className="w-[1445px] overflow-hidden pt-[30px] font-['Liberation_Serif',Georgia,serif] text-black">
            <h1 className="scale-x-110 text-center text-[45px] leading-[60px] font-bold tracking-[1.100px]">Newport News, VA Weather</h1>
            <h2 className="mt-[61px] scale-x-[1.095] text-center text-[28px] leading-10 font-bold tracking-[0.700px] text-[#808080]">
              8 Hour Forecast Tuesday December <Figures>19</Figures>
            </h2>
            <Forecast />
            <p className="mt-[18px] text-center text-[23.500px] leading-[30px]">
              <a className="text-[#808080] underline underline-offset-[3px]">Show Details</a> |{' '}
              <a className="text-[#808080] underline underline-offset-[3px]">Provided by AccuWeather</a>
            </p>
            <div className="mt-[167px] flex">
              <section className="ml-20 w-[810px]">
                <h2 className="mb-[17px] scale-x-[1.095] text-center text-[28px] leading-10 font-bold tracking-[0.600px] text-[#808080]">
                  Wakefield Radar
                </h2>
                <Radar />
              </section>
              <section className="ml-[156px] w-[302px]">
                <h2 className="scale-x-[1.095] text-center text-[28px] leading-10 font-bold tracking-[0.500px] text-[#808080]">NWS Alerts</h2>
                <pre className="mt-[15px] font-['DejaVu_Sans_Mono',monospace] text-[19px] leading-7">None</pre>
              </section>
            </div>
          </main>
          <Scrollbar />
        </div>
      </div>
    </div>
  );
}
